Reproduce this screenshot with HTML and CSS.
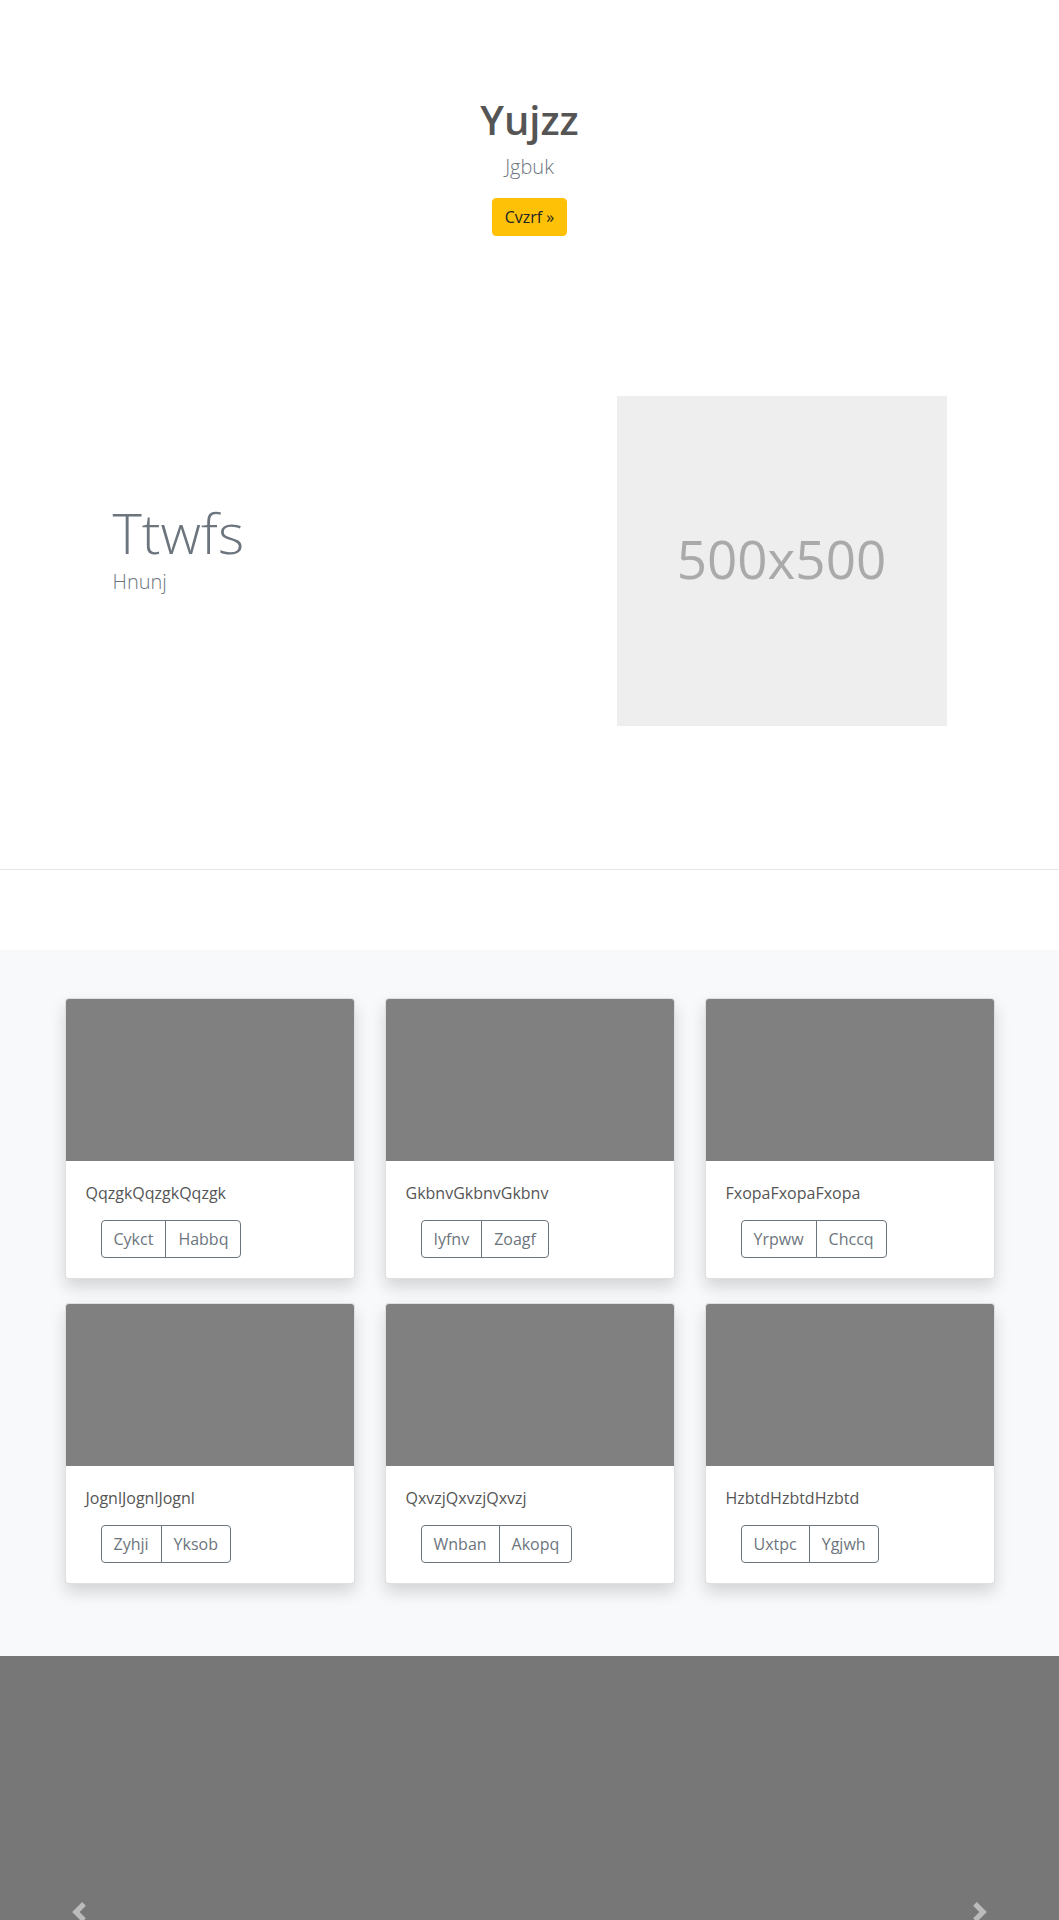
FILE: index.html
```html
<!DOCTYPE html>
<html lang="en">
<head>
  <meta charset="UTF-8">
  <meta name="viewport" content="width=device-width, initial-scale=1.0">
  <title>Yujzz</title>
  <link rel="stylesheet" href="styles.css">
</head>
<body>
  <main>
    <section class="hero">
      <h1>Yujzz</h1>
      <p class="lead muted">Jgbuk</p>
      <a href="#" class="btn btn-warning">Cvzrf &raquo;</a>
    </section>

    <section class="featurette">
      <div class="featurette-text">
        <h2 class="display">Ttwfs</h2>
        <p class="lead muted">Hnunj</p>
      </div>
      <div class="placeholder">500x500</div>
    </section>

    <hr class="divider">

    <section class="album">
      <div class="container">
        <div class="card-grid">
          <div class="card">
            <div class="card-img"></div>
            <div class="card-body">
              <p class="card-text">QqzgkQqzgkQqzgk</p>
              <div class="btn-group">
                <button class="btn btn-outline">Cykct</button>
                <button class="btn btn-outline">Habbq</button>
              </div>
            </div>
          </div>
          <div class="card">
            <div class="card-img"></div>
            <div class="card-body">
              <p class="card-text">GkbnvGkbnvGkbnv</p>
              <div class="btn-group">
                <button class="btn btn-outline">Iyfnv</button>
                <button class="btn btn-outline">Zoagf</button>
              </div>
            </div>
          </div>
          <div class="card">
            <div class="card-img"></div>
            <div class="card-body">
              <p class="card-text">FxopaFxopaFxopa</p>
              <div class="btn-group">
                <button class="btn btn-outline">Yrpww</button>
                <button class="btn btn-outline">Chccq</button>
              </div>
            </div>
          </div>
          <div class="card">
            <div class="card-img"></div>
            <div class="card-body">
              <p class="card-text">JognlJognlJognl</p>
              <div class="btn-group">
                <button class="btn btn-outline">Zyhji</button>
                <button class="btn btn-outline">Yksob</button>
              </div>
            </div>
          </div>
          <div class="card">
            <div class="card-img"></div>
            <div class="card-body">
              <p class="card-text">QxvzjQxvzjQxvzj</p>
              <div class="btn-group">
                <button class="btn btn-outline">Wnban</button>
                <button class="btn btn-outline">Akopq</button>
              </div>
            </div>
          </div>
          <div class="card">
            <div class="card-img"></div>
            <div class="card-body">
              <p class="card-text">HzbtdHzbtdHzbtd</p>
              <div class="btn-group">
                <button class="btn btn-outline">Uxtpc</button>
                <button class="btn btn-outline">Ygjwh</button>
              </div>
            </div>
          </div>
        </div>
      </div>
    </section>

    <div class="carousel">
      <div class="carousel-item"></div>
      <a href="#" class="carousel-control prev">
        <svg width="20" height="20" viewBox="0 0 8 8"><path fill="#fff" d="M5.25 0l-4 4 4 4 1.5-1.5-2.5-2.5 2.5-2.5-1.5-1.5z"/></svg>
      </a>
      <a href="#" class="carousel-control next">
        <svg width="20" height="20" viewBox="0 0 8 8"><path fill="#fff" d="M2.75 0l-1.5 1.5 2.5 2.5-2.5 2.5 1.5 1.5 4-4-4-4z"/></svg>
      </a>
    </div>
  </main>
</body>
</html>
```

FILE: styles.css
```css
body {
  margin: 0;
  font-family: "Segoe UI", "Open Sans", Arial, sans-serif;
  font-size: 16px;
  line-height: 1.5;
  color: #212529;
  background-color: #fff;
}
.muted {
  color: #6c757d;
}
.lead {
  font-size: 20px;
  font-weight: 300;
  line-height: 30px;
}
.hero {
  text-align: center;
  padding: 96px 20px 64px;
}
.hero h1 {
  margin: 0 0 8px;
  font-size: 40px;
  line-height: 48px;
  font-weight: 600;
  color: #555;
}
.hero p {
  margin: 0 0 16px;
}
.btn {
  display: inline-block;
  font-family: inherit;
  font-size: 16px;
  line-height: 24px;
  padding: 6px 12px;
  border: 1px solid transparent;
  border-radius: 4px;
  text-decoration: none;
  cursor: pointer;
}
.btn-warning {
  background-color: #ffc107;
  border-color: #ffc107;
  color: #212529;
}
.featurette {
  display: flex;
  align-items: center;
  justify-content: space-between;
  width: 834px;
  margin: 0 auto;
  padding: 96px 0 63px;
}
.display {
  margin: 0;
  font-size: 56px;
  font-weight: 300;
  line-height: 1.2;
  color: #6c757d;
}
.featurette-text p {
  margin: 0 0 26px;
}
.placeholder {
  width: 330px;
  height: 330px;
  background-color: #eee;
  color: #aaa;
  font-size: 53px;
  padding-bottom: 4px;
  box-sizing: border-box;
  display: flex;
  align-items: center;
  justify-content: center;
}
.divider {
  margin: 80px 0;
  border: 0;
  border-top: 1px solid rgba(0,0,0,0.1);
}
.album {
  background-color: #f8f9fa;
  padding: 48px 0 72px;
}
.container {
  max-width: 930px;
  margin: 0 auto;
  padding: 0 15px;
}
.card-grid {
  display: grid;
  grid-template-columns: repeat(3, 1fr);
  column-gap: 30px;
  row-gap: 24px;
}
.card {
  background-color: #fff;
  border: 1px solid rgba(0,0,0,0.125);
  border-radius: 4px;
  box-shadow: 0 8px 16px rgba(0,0,0,0.15);
  overflow: hidden;
}
.card-img {
  height: 162px;
  background-color: #808080;
}
.card-body {
  padding: 20px;
}
.card-text {
  margin: 0 0 15px;
  color: #555;
}
.btn-group {
  display: inline-flex;
  margin-left: 15px;
}
.btn-outline {
  background-color: transparent;
  border-color: #6c757d;
  color: #6c757d;
}
.btn-group .btn:first-child {
  border-top-right-radius: 0;
  border-bottom-right-radius: 0;
}
.btn-group .btn + .btn {
  margin-left: -1px;
  border-top-left-radius: 0;
  border-bottom-left-radius: 0;
}
.carousel {
  position: relative;
}
.carousel-item {
  height: 512px;
  background-color: #777;
}
.carousel-control {
  position: absolute;
  top: 0;
  bottom: 0;
  width: 15%;
  display: flex;
  align-items: center;
  justify-content: center;
  opacity: 0.5;
}
.carousel-control.prev {
  left: 0;
}
.carousel-control.next {
  right: 0;
}
```
